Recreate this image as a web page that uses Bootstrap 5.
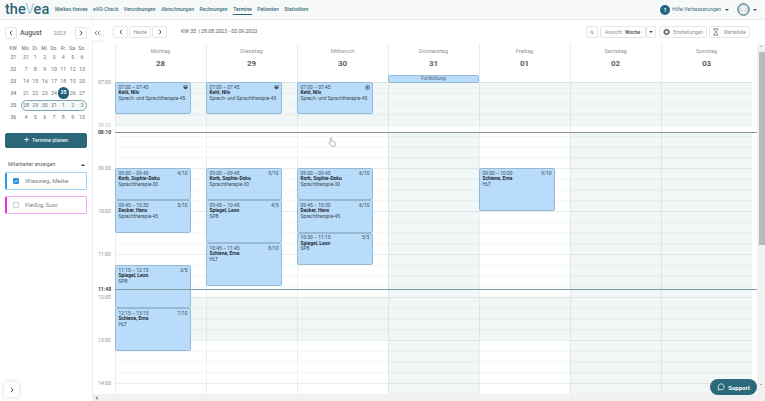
<!DOCTYPE html>
<html lang="de">
<head>
<meta charset="utf-8">
<title>thevea Termine</title>
<link href="https://cdn.jsdelivr.net/npm/bootstrap@5.3.0/dist/css/bootstrap.min.css" rel="stylesheet">
<style>
html,body{height:401px;overflow:hidden;background:#fff;font-family:Roboto,"Liberation Sans",sans-serif;color:#4d5558;font-size:5.5px}
.topbar{height:20px;padding:0 8px 0 5px;background:#f7f9f9;border-bottom:1px solid #e6ecec;flex-wrap:nowrap}
.brand-word{font-family:Roboto,sans-serif;font-size:14.500px;line-height:20px;font-weight:500;color:#2d6477;padding:0;margin:0 8px 0 0;width:42px;white-space:nowrap}
.brand-word i{font-style:normal;color:#7fbcd2;font-weight:300;margin:0 -.5px}
.menu-row{gap:5.500px}
.menu-row .nav-link{font-size:5.050px;line-height:8px;color:#41707f;padding:0 0 1px;font-weight:500;white-space:nowrap}
.menu-row .nav-link.active{color:#2d6477;border-bottom:1px solid #2d6477}
.help-dot{width:10px;height:10px;border-radius:50%;background:#1f6784;color:#fff;font-size:5px;font-weight:700;line-height:10px;text-align:center}
.help-text{font-size:5.050px;color:#41707f;margin:0 3px 0 2px;width:50px;white-space:nowrap}
.caret-d{width:0;height:0;border:2px solid transparent;border-top-color:#3b5560;border-bottom:0;display:inline-block}
.avatar-gap{margin:0 3px 0 8px}
.body-row{height:381px}
.sidebar{width:93px;flex:none;padding:7px 5px 0;position:relative;border-right:1px solid #eef1f1}
.sq-btn{width:12px;height:12px;padding:0;background:#fff;border:1px solid #e4e7e8;border-radius:2px;display:flex;align-items:center;justify-content:center}
.mc-head{height:12px;margin-bottom:3px}
.mc-month{font-size:6.800px;font-weight:500;color:#5a6164;margin-left:3px}
.mc-year{font-size:5.700px;color:#8b9194;margin-left:auto;margin-right:9px}
.mc-grid{display:grid;grid-template-columns:16.300px repeat(7,9.350px);grid-template-rows:9px repeat(6,12px);margin-top:2px;width:83px;position:relative}
.mc-grid>span{text-align:center;line-height:12px;font-size:5.300px;color:#6d7477}
.mc-grid>span.hd{height:9px;line-height:9px;font-size:4.800px;color:#5f6669;margin-top:1.500px}
.mc-grid>.wk{color:#5f6669}
.mc-grid>.today{background:#1f5f78;color:#fff;border-radius:50%;font-weight:700;position:relative;width:11.500px;height:11.500px;line-height:11.500px;margin-left:-1px}
.wk-pill{grid-column:2/9;grid-row:6;border:1px solid #7ca3b0;border-radius:6px;background:#f5f8f9;margin:.5px 0}
.plan-btn{display:flex;align-items:center;justify-content:center;gap:3px;width:82px;height:15px;padding:0;margin-top:10px;font-size:5.200px;background:#2c6779;border:1px solid #2c6779;border-radius:2px;color:#e8f1f3;font-weight:500}
.plan-btn:hover{background:#2c6779;color:#fff}
.plan-btn b{font-size:9px;font-weight:400;line-height:1}
.staff-hd{font-size:5.200px;color:#565d60;margin:11px 0 2px 3px;height:11px;line-height:11px;padding-right:2px}
.caret-u{width:0;height:0;border:2px solid transparent;border-bottom-color:#33393c;border-top:0;display:inline-block}
.staff-card{width:82px;height:18px;background:#fff;border:1px solid #9dd3f5;border-left:2px solid #2b9be8;border-radius:2px;font-size:6.100px;color:#7d8487;padding-left:6px;gap:6px;margin-bottom:6px}
.staff-card.alt{border-color:#f5a6f1;border-left-color:#ea2ee0}
.tick{width:6px;height:6px;border:1px solid #ccd0d2;border-radius:1px;background:#fff;flex:none;display:block}
.tick.on{background:#2e8fdb;border-color:#2e8fdb;position:relative}
.expand-btn{position:absolute;left:4px;bottom:4px;width:15px;height:15px;background:#fff;border:0;border-radius:2px;box-shadow:0 0 4px rgba(0,0,0,.16);padding:0;display:flex;align-items:center;justify-content:center}
.cal-main{min-width:0;position:relative}
.toolbar{height:24px;flex:none;padding:0 0 0 20px;position:relative}
.collapse-btn{position:absolute;left:-1px;top:6px;width:11px;height:14px;background:#fff;box-shadow:0 1px 3px rgba(0,0,0,.08);display:flex;align-items:center;justify-content:center}
.tb-btn{height:12px;background:#fff;border:1px solid #e4e7e8;border-radius:2px;font-size:5px;color:#8a9093;padding:0 3px;display:flex;align-items:center;justify-content:center;line-height:1}
.w15{width:15px}
.kw-text{font-size:5.200px;color:#565d60;margin-left:14px}
.tool-right{margin-left:auto;margin-right:15px;gap:2px}
.tb-strong{font-weight:600;color:#555;margin-left:3px}
.cal-wrap{height:350px;flex:none}
.axis{width:22px;height:350px;flex:none;position:relative;padding-top:38px;overflow:hidden}
.hour-box{height:43px;position:relative}
.hour-box span,.axis .now-lbl{position:absolute;left:2px;top:-3.500px;font-size:5.100px;line-height:7px;color:#8d9496;width:19px;text-align:center}
.axis .now-lbl{color:#3e4447;font-weight:700;background:#fff;z-index:3}
.axis .fade-lbl{color:#c3c8ca}
.days{width:637px;flex:none;position:relative}
.day-col{width:91px;flex:none}
.day-top{height:38px;position:relative;text-align:center;background:#fff;box-shadow:inset 1px 0 0 #eaeeee}
.day-name{font-size:5.700px;line-height:7px;color:#8d9496;padding-top:4px}
.day-num{font-size:8px;font-weight:700;line-height:10px;color:#5b6265;margin-top:3.500px}
.day-grid{height:312px;position:relative;overflow:hidden;background-color:#fff;background-image:linear-gradient(#e8eded 1px,transparent 1px),linear-gradient(#f3f5f5 1px,transparent 1px);background-size:100% 43px,100% 10.750px;box-shadow:inset 1px 0 0 #eaeeee}
.shade{position:absolute;left:0;right:0;background:rgba(60,150,140,.08)}
.appt{position:absolute;left:0;width:76px;background:#b9dcfb;border:1px solid #94bad8;border-radius:2px;padding:1.500px 2.500px;font-size:4.900px;line-height:5.500px;color:#3e4a52;overflow:hidden;z-index:1}
.appt strong{display:block;color:#1f2a30;font-weight:700}
.appt-row{display:flex;justify-content:space-between;align-items:center}
.allday{position:absolute;left:0;bottom:-1px;width:91px;height:8px;background:#b9dcfb;border:1px solid #94bad8;border-radius:2px;font-size:4.800px;line-height:6px;color:#4e6472;z-index:1}
.now-line{position:absolute;left:0;right:-5px;height:1px;background:#8f9496;z-index:2}
.now-line.late{background:#7d9aa5}
.hand{position:absolute;left:213px;top:93px;z-index:3}
.vbar{width:8px;flex:none;margin-left:auto;background:#f1f1f1;position:relative}
.vbar i{position:absolute;left:2px;right:0;top:8px;height:193px;background:#b9b9b9;display:block}
.vbar b{position:absolute;left:3px;width:0;height:0;border:1.500px solid transparent}
.vbar .up{top:2px;border-bottom-color:#777;border-top:0}
.vbar .dn{bottom:9px;border-top-color:#555;border-bottom:0}
.hbar{height:7px;background:#f1f1f1;flex:none;width:672px;padding-left:2px;display:flex;align-items:center}
.support{position:absolute;right:8px;bottom:6px;width:47px;height:16px;border-radius:8px;background:#2b6a7b;color:#fff;font-size:6px;font-weight:700;border:0;padding:0;display:flex;align-items:center;justify-content:center;gap:3px;z-index:5}
</style>
</head>
<body>
<nav class="navbar topbar d-flex align-items-center">
  <span class="navbar-brand brand-word">the<i>V</i>ea</span>
  <ul class="nav menu-row flex-nowrap">
    <li class="nav-item"><a class="nav-link" href="#">Meikes thevea</a></li>
    <li class="nav-item"><a class="nav-link" href="#">eVO-Check</a></li>
    <li class="nav-item"><a class="nav-link" href="#">Verordnungen</a></li>
    <li class="nav-item"><a class="nav-link" href="#">Abrechnungen</a></li>
    <li class="nav-item"><a class="nav-link" href="#">Rechnungen</a></li>
    <li class="nav-item"><a class="nav-link active" href="#">Termine</a></li>
    <li class="nav-item"><a class="nav-link" href="#">Patienten</a></li>
    <li class="nav-item"><a class="nav-link" href="#">Statistiken</a></li>
  </ul>
  <div class="ms-auto d-flex align-items-center">
    <span class="help-dot">?</span><span class="help-text">Hilfe/Verbesserungen</span><span class="caret-d"></span>
    <svg width="13" height="13" viewBox="0 0 13 13" class="avatar-gap"><circle cx="6.500" cy="6.500" r="5.700" fill="#d8dde0" stroke="#2d6477" stroke-width="1"/><circle cx="6.500" cy="5" r="2.200" fill="#f4f5f6"/><path d="M2.800 10.500c.8-2 2.200-2.800 3.700-2.800s2.900.8 3.700 2.800" fill="#f4f5f6"/></svg>
    <span class="caret-d"></span>
  </div>
</nav>
<div class="d-flex body-row">
  <aside class="sidebar">
    <div class="d-flex align-items-center mc-head">
      <button class="sq-btn" type="button"><svg width="4" height="6" viewBox="0 0 4 6"><path d="M3 .7L1 3l2 2.300" fill="none" stroke="#3b4448" stroke-width=".9"/></svg></button><span class="mc-month">August</span><span class="mc-year">2023</span><button class="sq-btn" type="button"><svg width="4" height="6" viewBox="0 0 4 6"><path d="M1 .7L3 3 1 5.300" fill="none" stroke="#3b4448" stroke-width=".9"/></svg></button>
    </div>
    <div class="mc-grid">
      <span class="hd">KW</span><span class="hd">Mo.</span><span class="hd">Di.</span><span class="hd">Mi.</span><span class="hd">Do.</span><span class="hd">Fr.</span><span class="hd">Sa.</span><span class="hd">So.</span>
      <span class="wk">31</span><span>31</span><span>1</span><span>2</span><span>3</span><span>4</span><span>5</span><span>6</span>
      <span class="wk">32</span><span>7</span><span>8</span><span>9</span><span>10</span><span>11</span><span>12</span><span>13</span>
      <span class="wk">33</span><span>14</span><span>15</span><span>16</span><span>17</span><span>18</span><span>19</span><span>20</span>
      <span class="wk">34</span><span>21</span><span>22</span><span>23</span><span>24</span><span class="today">25</span><span>26</span><span>27</span>
      <div class="wk-pill"></div>
      <span class="wk" style="grid-row:6;grid-column:1">35</span><span style="grid-row:6;grid-column:2;z-index:1">28</span><span style="grid-row:6;grid-column:3;z-index:1">29</span><span style="grid-row:6;grid-column:4;z-index:1">30</span><span style="grid-row:6;grid-column:5;z-index:1">31</span><span style="grid-row:6;grid-column:6;z-index:1">1</span><span style="grid-row:6;grid-column:7;z-index:1">2</span><span style="grid-row:6;grid-column:8;z-index:1">3</span>
      <span class="wk">36</span><span>4</span><span>5</span><span>6</span><span>7</span><span>8</span><span>9</span><span>10</span>
    </div>
    <button class="btn plan-btn" type="button"><b>+</b> Termine planen</button>
    <div class="staff-hd d-flex justify-content-between align-items-center"><span>Mitarbeiter anzeigen</span><span class="caret-u"></span></div>
    <div class="staff-card d-flex align-items-center"><span class="tick on"><svg width="4" height="4" viewBox="0 0 6 6" class="d-block"><path d="M.5 3.200l1.800 1.700L5.500 1" fill="none" stroke="#fff" stroke-width="1.200"/></svg></span><span>Wiesweg, Meike</span></div>
    <div class="staff-card alt d-flex align-items-center"><span class="tick"></span><span>Fleißig, Susi</span></div>
    <button class="expand-btn" type="button"><svg width="4" height="6" viewBox="0 0 4 6"><path d="M1 .7L3 3 1 5.300" fill="none" stroke="#333" stroke-width=".9"/></svg></button>
  </aside>
  <main class="cal-main flex-grow-1 d-flex flex-column">
    <div class="toolbar d-flex align-items-center">
      <span class="collapse-btn"><svg width="7" height="6" viewBox="0 0 7 6"><path d="M3 .7L1 3l2 2.300M6 .7L4 3l2 2.300" fill="none" stroke="#47626d" stroke-width=".8"/></svg></span>
      <button class="tb-btn w15" type="button"><svg width="4" height="6" viewBox="0 0 4 6"><path d="M3 .7L1 3l2 2.300" fill="none" stroke="#3b4448" stroke-width=".9"/></svg></button>
      <button class="tb-btn ms-1" type="button">Heute</button>
      <button class="tb-btn w15 ms-1" type="button"><svg width="4" height="6" viewBox="0 0 4 6"><path d="M1 .7L3 3 1 5.300" fill="none" stroke="#3b4448" stroke-width=".9"/></svg></button>
      <span class="kw-text">KW 35&nbsp; | 28.08.2023 - 03.09.2023</span>
      <div class="tool-right d-flex align-items-center">
        <button class="tb-btn" type="button" style="width:12px"><svg width="7" height="7" viewBox="0 0 7 7"><circle cx="2.900" cy="2.900" r="2.100" fill="none" stroke="#555" stroke-width=".8"/><path d="M4.500 4.500L6.500 6.500" stroke="#555" stroke-width="1"/></svg></button>
        <button class="tb-btn" type="button" style="width:46px">Ansicht <span class="tb-strong">Woche</span></button>
        <button class="tb-btn" type="button" style="width:10px;margin-left:-2px"><span class="caret-d"></span></button>
        <button class="tb-btn ms-1" type="button" style="width:48px;gap:3px"><svg width="8" height="8" viewBox="0 0 8 8"><circle cx="4" cy="4" r="2.200" fill="none" stroke="#666" stroke-width="1.500"/><circle cx="4" cy="4" r="3.400" fill="none" stroke="#666" stroke-width="1" stroke-dasharray="1.200 1"/></svg>Einstellungen</button>
        <button class="tb-btn" type="button" style="width:41px;gap:5px"><svg width="6" height="8" viewBox="0 0 6 8"><path d="M.5.5h5M.5 7.500h5M1 .5c0 2 1.600 2.400 2 3.500-.4 1-2 1.400-2 3.500M5 .5c0 2-1.600 2.400-2 3.500.4 1 2 1.400 2 3.500" fill="none" stroke="#666" stroke-width=".8"/></svg>Warteliste</button>
      </div>
    </div>
    <div class="cal-wrap d-flex">
      <div class="axis">
        <div class="hour-box"><span>07:00</span></div>
        <div class="hour-box"><span class="fade-lbl">08:00</span></div>
        <div class="hour-box"><span>09:00</span></div>
        <div class="hour-box"><span>10:00</span></div>
        <div class="hour-box"><span>11:00</span></div>
        <div class="hour-box"><span>12:00</span></div>
        <div class="hour-box"><span>13:00</span></div>
        <div class="hour-box"><span>14:00</span></div>
        <span class="now-lbl" style="top:85px">08:10</span>
        <span class="now-lbl" style="top:241.500px">11:48</span>
      </div>
      <div class="days d-flex">
        <div class="day-col">
          <div class="day-top"><div class="day-name">Montag</div><div class="day-num">28</div></div>
          <div class="day-grid">
            <div class="shade" style="top:0;height:43px"></div><div class="shade" style="top:215px;height:43px"></div>
            <div class="appt" style="top:0;height:32.250px"><div class="appt-row">07:00 – 07:45<svg width="5" height="5" viewBox="0 0 5 5"><path d="M.5.5h4v2.500L2.500 4.600.5 3z" fill="#3d4a52"/><path d="M1 1.500h3" stroke="#b9dcfb" stroke-width=".6"/></svg></div><strong>Kehl, Nils</strong>Sprech- und Sprachtherapie-45</div>
            <div class="appt" style="top:86px;height:32.250px"><div class="appt-row">09:00 – 09:45<span>4/10</span></div><strong>Korb, Sophie-Doku</strong>Sprachtherapie-30</div>
            <div class="appt" style="top:118.250px;height:32.250px"><div class="appt-row">09:45 – 10:30<span>5/10</span></div><strong>Decker, Hans</strong>Sprechtherapie-45</div>
            <div class="appt" style="top:183px;height:43px"><div class="appt-row">11:15 – 12:15<span>3/5</span></div><strong>Spiegel, Leon</strong>SPB</div>
            <div class="appt" style="top:226px;height:43px"><div class="appt-row">12:15 – 13:15<span>7/10</span></div><strong>Schiene, Erna</strong>HLT</div>
          </div>
        </div>
        <div class="day-col">
          <div class="day-top"><div class="day-name">Dienstag</div><div class="day-num">29</div></div>
          <div class="day-grid">
            <div class="shade" style="top:0;height:43px"></div><div class="shade" style="top:215px;height:43px"></div>
            <div class="appt" style="top:0;height:32.250px"><div class="appt-row">07:00 – 07:45<svg width="5" height="5" viewBox="0 0 5 5"><path d="M.5.5h4v2.500L2.500 4.600.5 3z" fill="#3d4a52"/><path d="M1 1.500h3" stroke="#b9dcfb" stroke-width=".6"/></svg></div><strong>Kehl, Nils</strong>Sprech- und Sprachtherapie-45</div>
            <div class="appt" style="top:86px;height:32.250px"><div class="appt-row">09:00 – 09:45<span>5/10</span></div><strong>Korb, Sophie-Doku</strong>Sprachtherapie-30</div>
            <div class="appt" style="top:118.250px;height:43px"><div class="appt-row">09:45 – 10:45<span>4/5</span></div><strong>Spiegel, Leon</strong>SPB</div>
            <div class="appt" style="top:161.250px;height:43px"><div class="appt-row">10:45 – 11:45<span>8/10</span></div><strong>Schiene, Erna</strong>HLT</div>
          </div>
        </div>
        <div class="day-col">
          <div class="day-top"><div class="day-name">Mittwoch</div><div class="day-num">30</div></div>
          <div class="day-grid">
            <div class="shade" style="top:0;height:43px"></div><div class="shade" style="top:215px;height:43px"></div>
            <div class="appt" style="top:0;height:32.250px"><div class="appt-row">07:00 – 07:45<svg width="5" height="5" viewBox="0 0 5 5"><circle cx="2.500" cy="2.500" r="2" fill="none" stroke="#3d4a52" stroke-width=".7"/><circle cx="2.500" cy="2.500" r=".9" fill="#3d4a52"/></svg></div><strong>Kehl, Nils</strong>Sprech- und Sprachtherapie-45</div>
            <div class="appt" style="top:86px;height:32.250px"><div class="appt-row">09:00 – 09:45<span>6/10</span></div><strong>Korb, Sophie-Doku</strong>Sprachtherapie-30</div>
            <div class="appt" style="top:118.250px;height:32.250px"><div class="appt-row">09:45 – 10:30<span>6/10</span></div><strong>Decker, Hans</strong>Sprechtherapie-45</div>
            <div class="appt" style="top:150.500px;height:32.250px"><div class="appt-row">10:30 – 11:15<span>5/5</span></div><strong>Spiegel, Leon</strong>SPB</div>
          </div>
        </div>
        <div class="day-col">
          <div class="day-top"><div class="day-name">Donnerstag</div><div class="day-num">31</div><div class="allday">Fortbildung</div></div>
          <div class="day-grid">
            <div class="shade" style="top:0;height:43px"></div><div class="shade" style="top:50px;height:262px"></div>
          </div>
        </div>
        <div class="day-col">
          <div class="day-top"><div class="day-name">Freitag</div><div class="day-num">01</div></div>
          <div class="day-grid">
            <div class="shade" style="top:0;height:43px"></div><div class="shade" style="top:215px;height:43px"></div>
            <div class="appt" style="top:86px;height:43px"><div class="appt-row">09:00 – 10:00<span>9/10</span></div><strong>Schiene, Erna</strong>HLT</div>
          </div>
        </div>
        <div class="day-col">
          <div class="day-top"><div class="day-name">Samstag</div><div class="day-num">02</div></div>
          <div class="day-grid"><div class="shade" style="top:0;height:43px"></div><div class="shade" style="top:50px;height:262px"></div></div>
        </div>
        <div class="day-col">
          <div class="day-top"><div class="day-name">Sonntag</div><div class="day-num">03</div></div>
          <div class="day-grid"><div class="shade" style="top:0;height:43px"></div><div class="shade" style="top:50px;height:262px"></div></div>
        </div>
        <div class="now-line" style="top:88px"></div>
        <div class="now-line late" style="top:245px"></div>
        <svg class="hand" width="8" height="10" viewBox="0 0 8 10"><path d="M2.500 5.500V1.300c0-1 1.200-1 1.200 0V4l2.800.8c.8.300 1 .8.800 1.700L6.800 9.200H3.300L1 6.200c-.4-.7.500-1.400 1-.8z" fill="#fff" stroke="#9a9fa1" stroke-width=".7"/></svg>
      </div>
      <div class="vbar"><b class="up"></b><i></i><b class="dn"></b></div>
    </div>
    <div class="hbar"><svg width="3" height="4" viewBox="0 0 3 4"><path d="M2.500 0v4L.5 2z" fill="#777"/></svg></div>
    <button class="support" type="button"><svg width="8" height="8" viewBox="0 0 8 8"><path d="M1.200 7l.5-1.500A3 3 0 1 1 3 6.600z" fill="none" stroke="#fff" stroke-width=".8"/></svg>Support</button>
  </main>
</div>
<script src="https://cdn.jsdelivr.net/npm/bootstrap@5.3.0/dist/js/bootstrap.bundle.min.js"></script>
</body>
</html>
